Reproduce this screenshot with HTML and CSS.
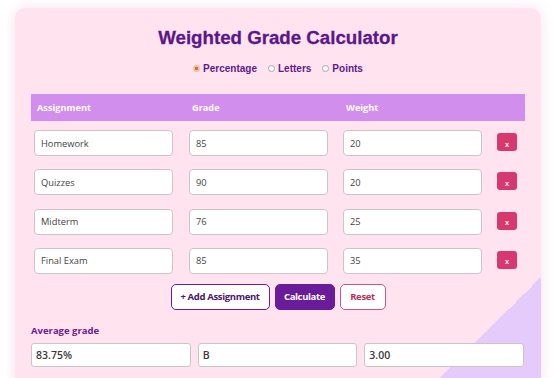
FILE: index.html
```html
<!DOCTYPE html>
<html>
<head>
<meta charset="utf-8">
<link rel="stylesheet" href="styles.css">
</head>
<body>
<div class="card">
  <h1 class="title">Weighted Grade Calculator</h1>
  <div class="modes">
    <label class="opt"><span class="dot on"></span>Percentage</label>
    <label class="opt"><span class="dot"></span>Letters</label>
    <label class="opt"><span class="dot"></span>Points</label>
  </div>
  <div class="table">
    <div class="thead">
      <div class="th">Assignment</div>
      <div class="th">Grade</div>
      <div class="th">Weight</div>
      <div class="th"></div>
    </div>
    <div class="rows">
      <div class="row">
        <div class="cell"><input class="field" type="text" value="Homework"></div>
        <div class="cell"><input class="field" type="text" value="85"></div>
        <div class="cell"><input class="field" type="text" value="20"></div>
        <div class="cell"><button class="del">x</button></div>
      </div>
      <div class="row">
        <div class="cell"><input class="field" type="text" value="Quizzes"></div>
        <div class="cell"><input class="field" type="text" value="90"></div>
        <div class="cell"><input class="field" type="text" value="20"></div>
        <div class="cell"><button class="del">x</button></div>
      </div>
      <div class="row">
        <div class="cell"><input class="field" type="text" value="Midterm"></div>
        <div class="cell"><input class="field" type="text" value="76"></div>
        <div class="cell"><input class="field" type="text" value="25"></div>
        <div class="cell"><button class="del">x</button></div>
      </div>
      <div class="row">
        <div class="cell"><input class="field" type="text" value="Final Exam"></div>
        <div class="cell"><input class="field" type="text" value="85"></div>
        <div class="cell"><input class="field" type="text" value="35"></div>
        <div class="cell"><button class="del">x</button></div>
      </div>
    </div>
  </div>
  <div class="actions">
    <button class="btn btn-add">+ Add Assignment</button>
    <button class="btn btn-calc">Calculate</button>
    <button class="btn btn-reset">Reset</button>
  </div>
  <div class="label">Average grade</div>
  <div class="results">
    <input class="res" type="text" value="83.75%" readonly>
    <input class="res" type="text" value="B" readonly>
    <input class="res" type="text" value="3.00" readonly>
  </div>
</div>
</body>
</html>
```
FILE: styles.css
```css
html, body {
  margin: 0;
  padding: 0;
  background: #ffffff;
  overflow: hidden;
  height: 378px;
}
body {
  font-family: "Open Sans", "Liberation Sans", sans-serif;
}
.card {
  margin: 8px 0 0 15px;
  width: 494px;
  height: 352px;
  padding: 19px 16px 11px 16px;
  border-radius: 10px;
  background: linear-gradient(to bottom right, rgba(229,203,252,0) 50%, #e5cbfc 50%) right bottom / 113px 113px no-repeat, #ffe4ef;
  box-shadow: 0 0 14px rgba(240, 190, 215, 0.45);
  display: flex;
  flex-direction: column;
}
.title {
  margin: 0;
  font-family: "Liberation Sans", Arial, sans-serif;
  font-size: 18.7px;
  line-height: 22px;
  font-weight: bold;
  color: #5a1889;
  text-align: center;
  -webkit-text-stroke: 0.3px #5a1889;
}
.modes {
  margin-top: 12px;
  height: 14px;
  display: flex;
  justify-content: center;
  align-items: center;
  gap: 11px;
  font-family: "Liberation Sans", Arial, sans-serif;
  font-size: 10px;
  font-weight: bold;
  color: #5c1a8b;
}
.opt {
  display: flex;
  align-items: center;
  gap: 3px;
}
.dot {
  width: 5px;
  height: 5px;
  border-radius: 50%;
  border: 1px solid #a8a3a8;
  background: #ffffff;
}
.dot.on {
  border-color: #f0b48c;
  background: radial-gradient(circle, #c9733d 0 45%, #f3c6a6 55%);
}
.table {
  margin-top: 19px;
}
.thead {
  display: grid;
  grid-template-columns: 155px 154px 154px 31px;
  height: 27px;
  align-items: center;
  background: #d28eec;
}
.th {
  padding-left: 6px;
  font-size: 9.2px;
  font-weight: 700;
  color: #ffffff;
}
.rows {
  padding-top: 9px;
  display: flex;
  flex-direction: column;
  gap: 13.3px;
}
.row {
  display: grid;
  grid-template-columns: 155px 154px 154px 31px;
  height: 26px;
}
.cell {
  padding-left: 3px;
  display: flex;
  align-items: flex-start;
}
.field {
  box-sizing: border-box;
  width: 139px;
  height: 26px;
  margin: 0;
  padding: 0 0 0 6px;
  border: 1px solid #cdc4ca;
  border-radius: 4px;
  background: #ffffff;
  font-family: "Open Sans", sans-serif;
  font-size: 9.3px;
  color: #444444;
  outline: none;
}
.del {
  margin-top: 3px;
  width: 20px;
  height: 18px;
  padding: 4px 0 0 0;
  border: none;
  border-radius: 3px;
  background: #d7386e;
  color: #ffffff;
  font-family: "Open Sans", sans-serif;
  font-size: 7.5px;
  font-weight: 600;
  line-height: 11px;
}
.actions {
  margin-top: 10px;
  display: flex;
  justify-content: center;
  gap: 5px;
}
.btn {
  box-sizing: border-box;
  height: 26px;
  padding: 0;
  border-radius: 5px;
  font-family: "Open Sans", sans-serif;
  font-size: 9.5px;
  font-weight: 700;
  letter-spacing: -0.35px;
  white-space: nowrap;
  cursor: pointer;
}
.btn-add {
  width: 99px;
  background: #ffffff;
  border: 1px solid #6a1b9a;
  color: #4a1670;
}
.btn-calc {
  width: 60px;
  background: #6a1b9a;
  border: 1px solid #6a1b9a;
  color: #ffffff;
}
.btn-reset {
  width: 46px;
  background: #ffffff;
  border: 1px solid #c2577f;
  color: #b8325f;
}
.label {
  margin-top: 14px;
  height: 14px;
  line-height: 14px;
  font-size: 9.5px;
  font-weight: 700;
  color: #6a2090;
}
.results {
  margin-top: 5.5px;
  display: grid;
  grid-template-columns: 1fr 1fr 1fr;
  gap: 7px;
  padding-right: 1px;
}
.res {
  box-sizing: border-box;
  width: 100%;
  height: 24px;
  margin: 0;
  padding: 0 0 0 4px;
  border: 1px solid #cdc4ca;
  border-radius: 3px;
  background: #ffffff;
  font-family: "Open Sans", sans-serif;
  font-size: 10.5px;
  font-weight: 600;
  color: #3a3a3a;
  outline: none;
}
```
